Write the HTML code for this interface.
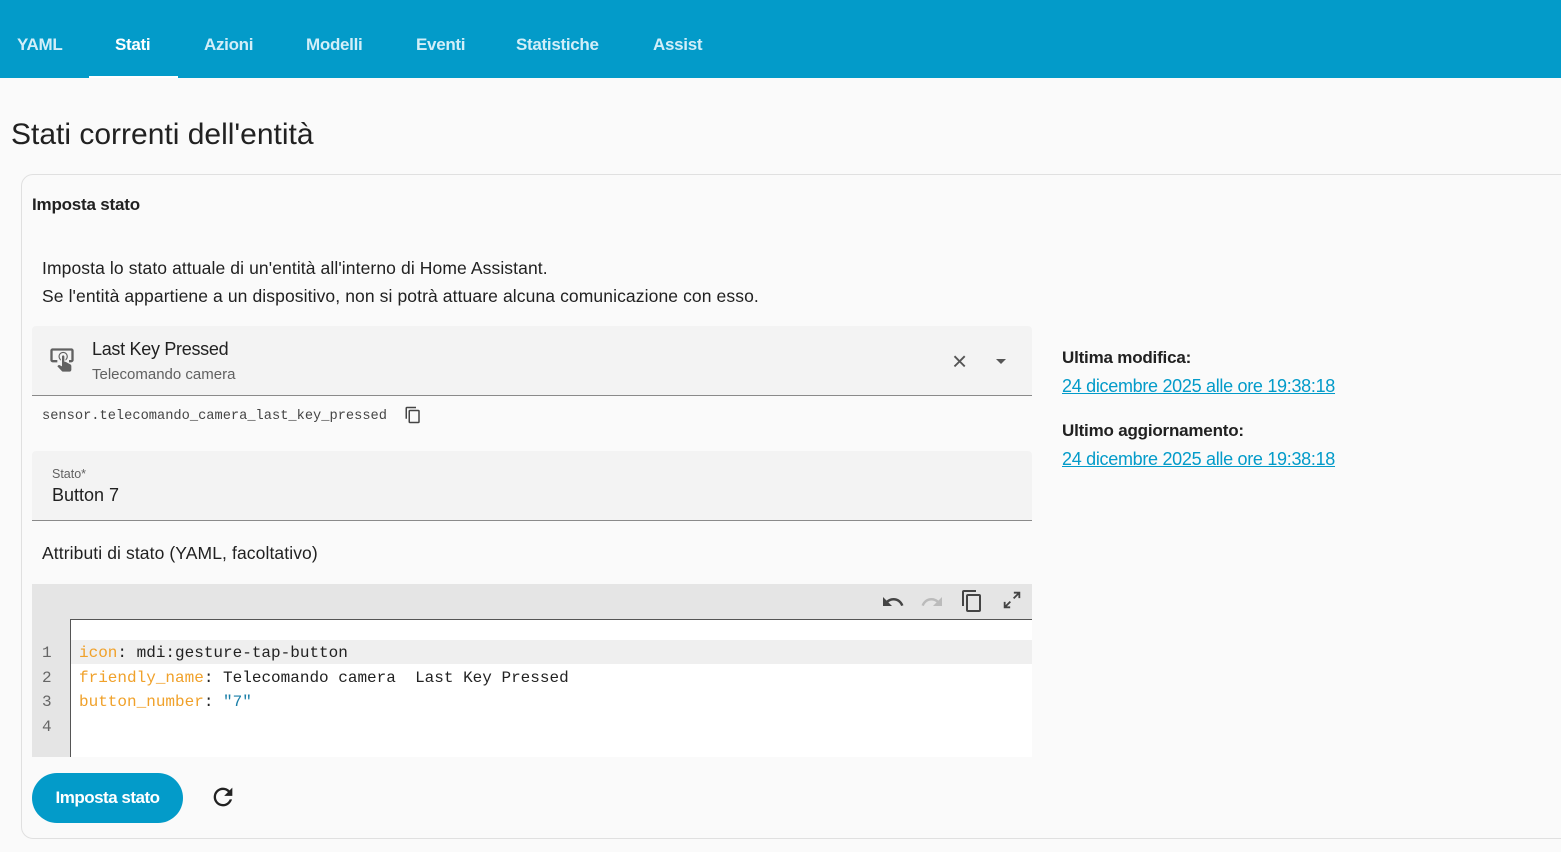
<!DOCTYPE html>
<html><head><meta charset="utf-8"><style>
*{box-sizing:border-box;margin:0;padding:0}
body{width:1561px;height:852px;overflow:hidden;background:#fafafa;font-family:"Liberation Sans",sans-serif;color:#212121;position:relative}
.hdr{position:absolute;left:0;top:0;width:1561px;height:78px;background:#039bc9}
.tab{position:absolute;top:35px;font-size:17px;font-weight:bold;color:#d2eef8;letter-spacing:-0.3px}
.tab.on{color:#fff}
.ul{position:absolute;left:89px;top:76px;width:89px;height:2px;background:#fff}
h1{position:absolute;left:11px;top:118px;font-size:30px;font-weight:normal;color:#212121}
.card{position:absolute;left:21px;top:174px;width:1560px;height:665px;border:1px solid #e0e0e0;border-radius:12px;background:#fafafa}
.a{position:absolute}
.mono{font-family:"Liberation Mono",monospace}
a{color:#039bc9;text-decoration:underline}
</style></head><body>
<div class="hdr"></div>
<div class="tab" style="left:17px">YAML</div>
<div class="tab on" style="left:115px">Stati</div>
<div class="tab" style="left:204px">Azioni</div>
<div class="tab" style="left:306px">Modelli</div>
<div class="tab" style="left:416px">Eventi</div>
<div class="tab" style="left:516px">Statistiche</div>
<div class="tab" style="left:653px">Assist</div>
<div class="ul"></div>
<h1>Stati correnti dell'entità</h1>
<div class="card"></div>
<div class="a" style="left:32px;top:195px;font-size:17px;font-weight:bold;letter-spacing:-0.2px">Imposta stato</div>
<div class="a" style="left:42px;top:254px;font-size:17.5px;line-height:28px;letter-spacing:0.1px">Imposta lo stato attuale di un'entità all'interno di Home Assistant.<br>Se l'entità appartiene a un dispositivo, non si potrà attuare alcuna comunicazione con esso.</div>
<div class="a" style="left:32px;top:326px;width:1000px;height:70px;background:#f3f3f3;border-bottom:1px solid #8a8a8a;border-radius:4px 4px 0 0"></div>
<svg class="a" style="left:48px;top:346px" width="28" height="28" viewBox="0 0 24 24"><path fill="#616161" d="M13 5C15.2 5 17 6.8 17 9 17 10.5 16.2 11.8 15 12.5V11.3C15.6 10.8 16 9.9 16 9 16 7.3 14.7 6 13 6S10 7.3 10 9C10 9.9 10.4 10.8 11 11.3V12.5C9.8 11.8 9 10.5 9 9 9 6.8 10.8 5 13 5M20 20.5C20 21.3 19.3 22 18.5 22H13C12.6 22 12.3 21.9 12 21.6L8 17.4 8.7 16.6C8.9 16.4 9.2 16.3 9.5 16.3H9.7L12 17.5V9C12 8.4 12.4 8 13 8S14 8.4 14 9V13.5L15.2 13.6 19.1 15.8C19.6 16 20 16.6 20 17.1V20.5M20 2H4C2.9 2 2 2.9 2 4V12C2 13.1 2.9 14 4 14H8V12H4V4H20V12H18V14H20C21.1 14 22 13.1 22 12V4C22 2.9 21.1 2 20 2Z"/></svg>
<div class="a" style="left:92px;top:339px;font-size:18px;letter-spacing:-0.3px">Last Key Pressed</div>
<div class="a" style="left:92px;top:366px;font-size:15px;color:#616161">Telecomando camera</div>
<div class="a" style="left:952px;top:348px;font-size:26px;color:#555;line-height:26px">×</div>
<div class="a" style="left:996px;top:359px;width:0;height:0;border-left:5px solid transparent;border-right:5px solid transparent;border-top:5px solid #555"></div>
<div class="a mono" style="left:42px;top:409px;font-size:13.7px;color:#444">sensor.telecomando_camera_last_key_pressed</div>
<svg class="a" style="left:404px;top:406px" width="18" height="18" viewBox="0 0 24 24"><path fill="#444" d="M19 21H8V7H19M19 5H8A2 2 0 0 0 6 7V21A2 2 0 0 0 8 23H19A2 2 0 0 0 21 21V7A2 2 0 0 0 19 5M16 1H4A2 2 0 0 0 2 3V17H4V3H16V1Z"/></svg>
<div class="a" style="left:32px;top:451px;width:1000px;height:70px;background:#f3f3f3;border-bottom:1px solid #8a8a8a;border-radius:4px 4px 0 0"></div>
<div class="a" style="left:52px;top:467px;font-size:12.5px;color:#616161">Stato*</div>
<div class="a" style="left:52px;top:485px;font-size:18px">Button 7</div>
<div class="a" style="left:42px;top:543px;font-size:17.5px;letter-spacing:0.1px">Attributi di stato (YAML, facoltativo)</div>
<div class="a" style="left:32px;top:584px;width:1000px;height:173px;background:#e5e5e5"></div>
<div class="a" style="left:70px;top:619px;width:962px;height:138px;background:#fff;border-top:1px solid #555;border-left:1px solid #555"></div>
<div class="a" style="left:71px;top:640px;width:961px;height:24px;background:#efefef"></div>
<svg class="a" style="left:881px;top:590px" width="24" height="24" viewBox="0 0 24 24"><path fill="#444" d="M12.5 8C9.85 8 7.45 9 5.6 10.6L2 7V16H11L7.38 12.38C8.77 11.22 10.54 10.5 12.5 10.5 16.04 10.5 19.05 12.81 20.1 16L22.47 15.22C21.08 11.030 17.15 8 12.5 8Z"/></svg>
<svg class="a" style="left:920px;top:590px" width="24" height="24" viewBox="0 0 24 24"><path fill="#bbb" d="M18.4 10.6C16.55 9 14.150 8 11.5 8 6.85 8 2.92 11.03 1.54 15.22L3.9 16C4.95 12.81 7.95 10.5 11.5 10.5 13.45 10.5 15.23 11.22 16.62 12.38L13 16H22V7L18.4 10.6Z"/></svg>
<svg class="a" style="left:960px;top:589px" width="24" height="24" viewBox="0 0 24 24"><path fill="#444" d="M19 21H8V7H19M19 5H8A2 2 0 0 0 6 7V21A2 2 0 0 0 8 23H19A2 2 0 0 0 21 21V7A2 2 0 0 0 19 5M16 1H4A2 2 0 0 0 2 3V17H4V3H16V1Z"/></svg>
<svg class="a" style="left:1001px;top:589px" width="22" height="22" viewBox="0 0 24 24"><path fill="#444" d="M10 21V19H6.41L10.91 14.5 9.5 13.09 5 17.59V14H3V21H10M14.5 10.91L19 6.41V10H21V3H14V5H17.59L13.09 9.5 14.5 10.91Z"/></svg>
<div class="a mono" style="left:42px;top:641px;font-size:16px;line-height:24.5px;color:#666">1<br>2<br>3<br>4</div>
<div class="a mono" style="left:79px;top:641px;font-size:16px;line-height:24.5px;color:#222;white-space:pre"><span style="color:#f0a12a">icon</span>: mdi:gesture-tap-button
<span style="color:#f0a12a">friendly_name</span>: Telecomando camera  Last Key Pressed
<span style="color:#f0a12a">button_number</span>: <span style="color:#1a7fa8">"7"</span></div>
<div class="a" style="left:32px;top:773px;width:151px;height:50px;border-radius:25px;background:#039bc9;color:#fff;font-size:17px;font-weight:bold;text-align:center;line-height:50px;letter-spacing:-0.5px">Imposta stato</div>
<svg class="a" style="left:209px;top:783px" width="28" height="28" viewBox="0 0 24 24"><path fill="#222" d="M17.65 6.35C16.2 4.9 14.21 4 12 4A8 8 0 0 0 4 12 8 8 0 0 0 12 20C15.73 20 18.84 17.45 19.73 14H17.65C16.83 16.33 14.61 18 12 18A6 6 0 0 1 6 12 6 6 0 0 1 12 6C13.66 6 15.14 6.690 16.22 7.78L13 11H20V4L17.65 6.35Z"/></svg>
<div class="a" style="left:1062px;top:348px;font-size:17px;font-weight:bold;letter-spacing:-0.2px">Ultima modifica:</div>
<div class="a" style="left:1062px;top:376px;font-size:18px;letter-spacing:-0.3px"><a>24 dicembre 2025 alle ore 19:38:18</a></div>
<div class="a" style="left:1062px;top:421px;font-size:17px;font-weight:bold;letter-spacing:-0.2px">Ultimo aggiornamento:</div>
<div class="a" style="left:1062px;top:449px;font-size:18px;letter-spacing:-0.3px"><a>24 dicembre 2025 alle ore 19:38:18</a></div>
</body></html>
